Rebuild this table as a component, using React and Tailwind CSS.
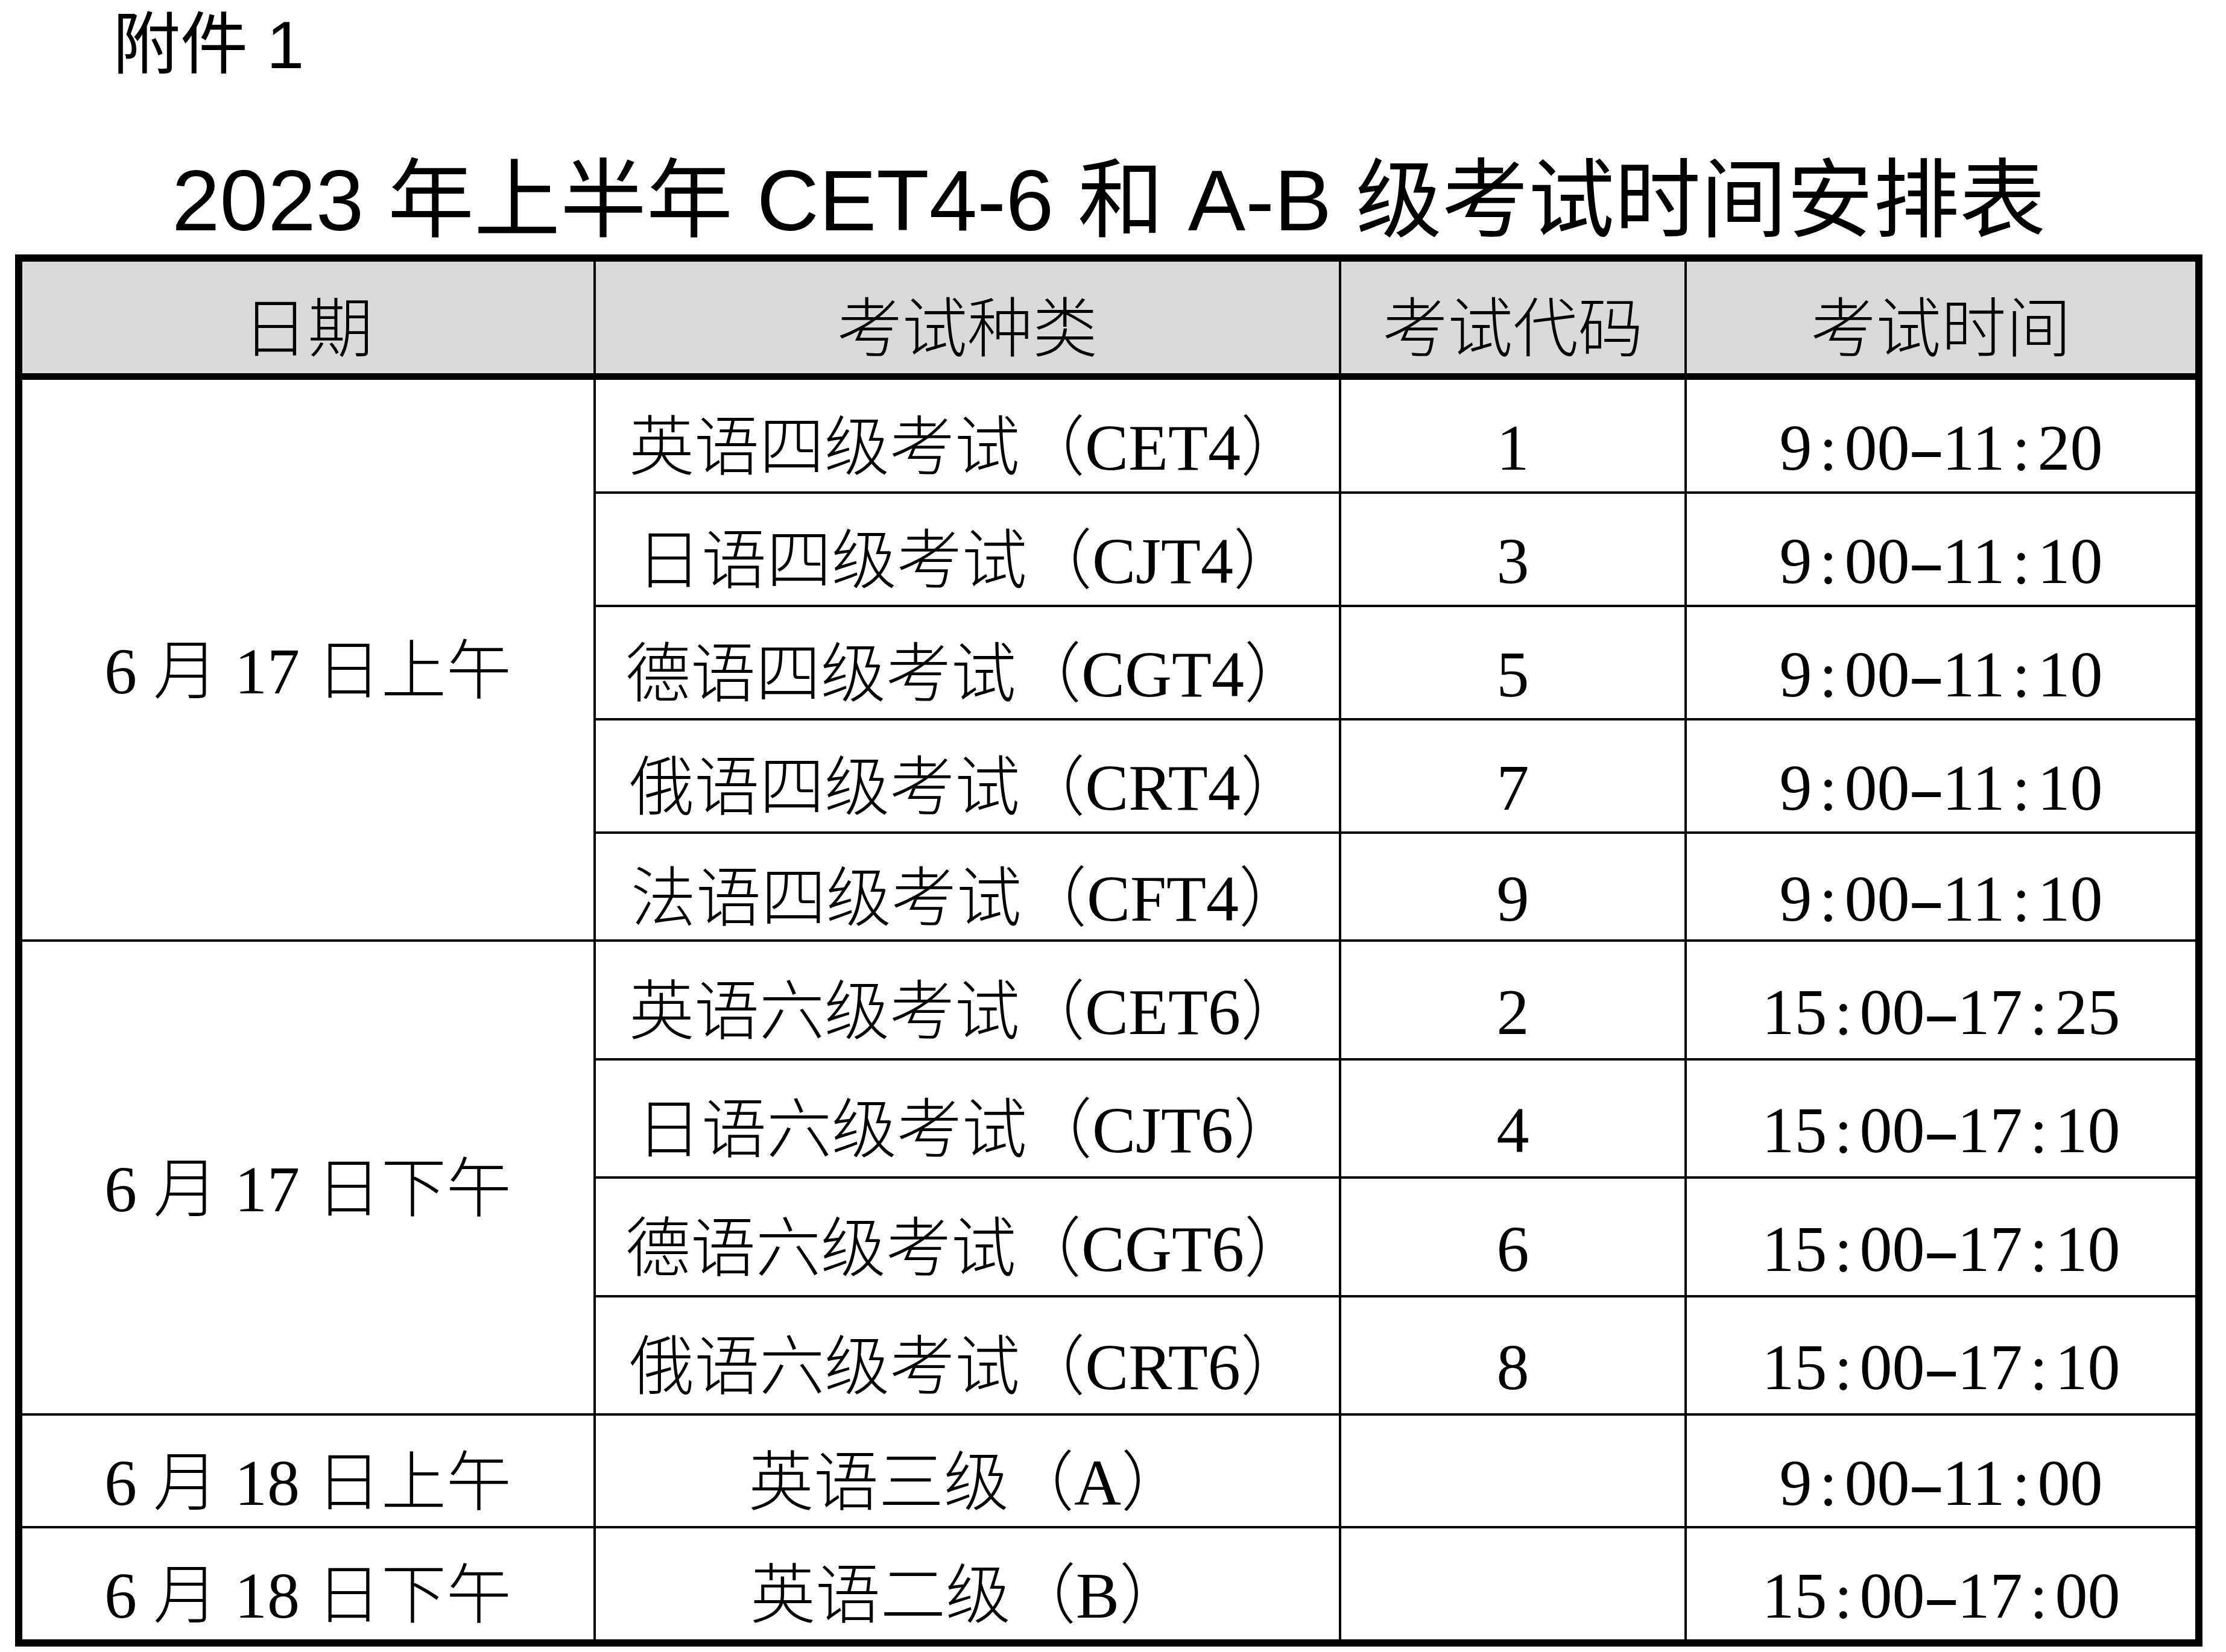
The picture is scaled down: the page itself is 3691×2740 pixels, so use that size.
import React from "react";

const groups = [
  {
    date: "6 月 17 日上午",
    span: "row-span-5",
    items: [
      ["英语四级考试", "CET4", "1", "9:00-11:20"],
      ["日语四级考试", "CJT4", "3", "9:00-11:10"],
      ["德语四级考试", "CGT4", "5", "9:00-11:10"],
      ["俄语四级考试", "CRT4", "7", "9:00-11:10"],
      ["法语四级考试", "CFT4", "9", "9:00-11:10"],
    ],
  },
  {
    date: "6 月 17 日下午",
    span: "row-span-4",
    items: [
      ["英语六级考试", "CET6", "2", "15:00-17:25"],
      ["日语六级考试", "CJT6", "4", "15:00-17:10"],
      ["德语六级考试", "CGT6", "6", "15:00-17:10"],
      ["俄语六级考试", "CRT6", "8", "15:00-17:10"],
    ],
  },
  {
    date: "6 月 18 日上午",
    span: "row-span-1",
    items: [["英语三级", "A", "", "9:00-11:00"]],
  },
  {
    date: "6 月 18 日下午",
    span: "row-span-1",
    items: [["英语二级", "B", "", "15:00-17:00"]],
  },
];

function Time({ value }) {
  return (
    <span>
      {value.split("").map((ch, i) =>
        ch === ":" ? (
          <span key={i} className="inline-block w-[0.5em] text-center">:</span>
        ) : ch === "-" ? (
          <span key={i} className="inline-block w-[0.5em] text-center scale-x-[1.7]">-</span>
        ) : (
          <span key={i}>{ch}</span>
        )
      )}
    </span>
  );
}

function Cell({ children, className = "", bg = "bg-white" }) {
  return (
    <div className={`${bg} flex items-center justify-center pt-[40px] leading-none ${className}`}>
      {children}
    </div>
  );
}

export default function App() {
  return (
    <div className="w-[3691px] h-[2740px] bg-white text-black overflow-hidden">
      <div className="pt-[19px] pl-[187px] text-[112px] leading-none font-['Liberation_Sans','Noto_Sans_CJK_SC',sans-serif]">
        附件 1
      </div>

      <div className="mt-[130px] pl-[25px] w-[3652px] text-center text-[143px] leading-none font-['Liberation_Sans','Noto_Sans_CJK_SC',sans-serif]">
        2023 年上半年 CET4-6 和 A-B 级考试时间安排表
      </div>

      <div className="mt-[18px] ml-[25px] w-[3627px] border-[12px] border-black bg-black text-[108px] font-light font-['Liberation_Serif','Noto_Sans_CJK_SC',serif]">
        <div className="grid grid-cols-[947px_1232px_569px_843px] gap-[4px] h-[185px]">
          {["日期", "考试种类", "考试代码", "考试时间"].map((h) => (
            <Cell key={h} bg="bg-[#d9d9d9]">
              {h}
            </Cell>
          ))}
        </div>

        <div className="mt-[11px] grid grid-cols-[947px_1232px_569px_843px] grid-rows-[185px_184px_184px_184px_175px_193px_192px_193px_192px_183px_184px] gap-[4px]">
          {groups.map((g) => (
            <React.Fragment key={g.date}>
              <Cell className={g.span}>{g.date}</Cell>
              {g.items.map(([name, code, num, time]) => (
                <React.Fragment key={code}>
                  <Cell>
                    {name}（{code}）
                  </Cell>
                  <Cell>{num}</Cell>
                  <Cell>
                    <Time value={time} />
                  </Cell>
                </React.Fragment>
              ))}
            </React.Fragment>
          ))}
        </div>
      </div>
    </div>
  );
}
